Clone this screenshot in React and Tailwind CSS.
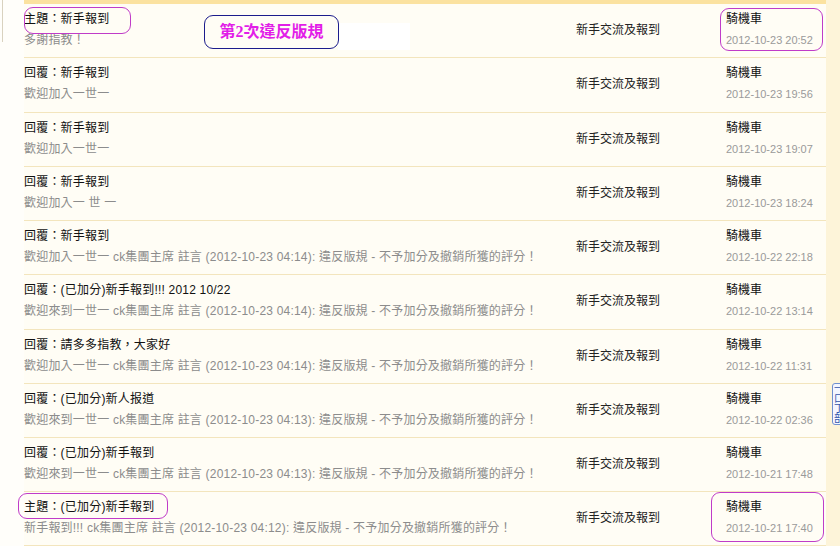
const rows = [
  { h: 'h-[54px]', title: '主題：新手報到', sub: '多謝指教！', date: '2012-10-23 20:52' },
  { h: 'h-[55px]', title: '回覆：新手報到', sub: '歡迎加入一世一', date: '2012-10-23 19:56' },
  { h: 'h-[54px]', title: '回覆：新手報到', sub: '歡迎加入一世一', date: '2012-10-23 19:07' },
  { h: 'h-[54px]', title: '回覆：新手報到', sub: '歡迎加入一 世 一', date: '2012-10-23 18:24' },
  { h: 'h-[54px]', title: '回覆：新手報到', sub: '歡迎加入一世一 ck集團主席 註言 (2012-10-23 04:14): 違反版規 - 不予加分及撤銷所獲的評分！', date: '2012-10-22 22:18' },
  { h: 'h-[55px]', title: '回覆：(已加分)新手報到!!! 2012 10/22', sub: '歡迎來到一世一 ck集團主席 註言 (2012-10-23 04:14): 違反版規 - 不予加分及撤銷所獲的評分！', date: '2012-10-22 13:14' },
  { h: 'h-[54px]', title: '回覆：請多多指教，大家好', sub: '歡迎加入一世一 ck集團主席 註言 (2012-10-23 04:14): 違反版規 - 不予加分及撤銷所獲的評分！', date: '2012-10-22 11:31' },
  { h: 'h-[54px]', title: '回覆：(已加分)新人报道', sub: '歡迎來到一世一 ck集團主席 註言 (2012-10-23 04:13): 違反版規 - 不予加分及撤銷所獲的評分！', date: '2012-10-22 02:36' },
  { h: 'h-[54px]', title: '回覆：(已加分)新手報到', sub: '歡迎來到一世一 ck集團主席 註言 (2012-10-23 04:13): 違反版規 - 不予加分及撤銷所獲的評分！', date: '2012-10-21 17:48' },
  { h: 'h-[54px]', title: '主題：(已加分)新手報到', sub: '新手報到!!! ck集團主席 註言 (2012-10-23 04:12): 違反版規 - 不予加分及撤銷所獲的評分！', date: '2012-10-21 17:40' },
];

const font = { fontFamily: '"Liberation Sans", "Noto Sans CJK TC", sans-serif' };

const Row = ({ row }) => (
  <div className={`${row.h} flex border-b border-[#f3e5bd] text-[12px] leading-[21px]`}>
    <div className="flex-1 pt-[5px] min-w-0 tracking-[0.2px]">
      <div className="text-[#111] whitespace-nowrap">{row.title}</div>
      <div className="text-[#8c8c8c] whitespace-nowrap">{row.sub}</div>
    </div>
    <div className="w-[150px] flex items-center text-[#222] pb-[1px]">新手交流及報到</div>
    <div className="w-[100px] pt-[5px]">
      <div className="text-[#111]">騎機車</div>
      <div className="text-[11px] text-[#9a9a9a]">{row.date}</div>
    </div>
  </div>
);

export default function App() {
  return (
    <div className="relative w-[840px] h-[546px] overflow-hidden bg-[#fffdf5] flex" style={font}>
      <div className="w-[24px] bg-[#fffefa] relative">
        <div className="absolute left-[2px] top-0 w-[1px] h-[42px] bg-[#d9d2bf]" />
      </div>
      <div className="w-[802px] flex flex-col">
        <div className="h-[4px] bg-[#fbe2a0]" />
        {rows.map((row, i) => (
          <Row key={i} row={row} />
        ))}
      </div>
      <div className="flex-1 bg-[#fdf4d9] relative">
        {/* partly hidden side widget, clipped by the window edge as in the screenshot */}
        <div className="absolute left-[6px] top-[383px] w-[16px] h-[42px] border border-[#6f8fd0] rounded-[3px] bg-[#f4f6ff] overflow-hidden text-[10px] leading-[10px] text-[#3355aa] pl-[1px]">
          <div>一</div>
          <div>口</div>
          <div>丁</div>
          <div>部</div>
        </div>
      </div>

      {/* annotations drawn over the list */}
      <div className="absolute left-[24px] top-[7px] w-[107px] h-[27px] border border-[#c03cc8] rounded-[9px]" />
      <div className="absolute left-[720px] top-[8px] w-[103px] h-[43px] border border-[#c03cc8] rounded-[9px]" />
      <div className="absolute left-[338px] top-[23px] w-[72px] h-[27px] bg-white" />
      <div className="absolute left-[204px] top-[15px] w-[135px] h-[34px] border border-[#1c1c8c] rounded-[9px] bg-[#fffdf5] flex items-center justify-center">
        <span className="text-[16px] font-bold text-[#e21ee8]" style={{ fontFamily: '"Liberation Serif", "Noto Sans CJK TC", serif' }}>第2次違反版規</span>
      </div>
      <div className="absolute left-[18px] top-[493px] w-[150px] h-[26px] border border-[#c03cc8] rounded-[9px]" />
      <div className="absolute left-[711px] top-[492px] w-[113px] h-[50px] border border-[#c03cc8] rounded-[9px]" />
    </div>
  );
}
